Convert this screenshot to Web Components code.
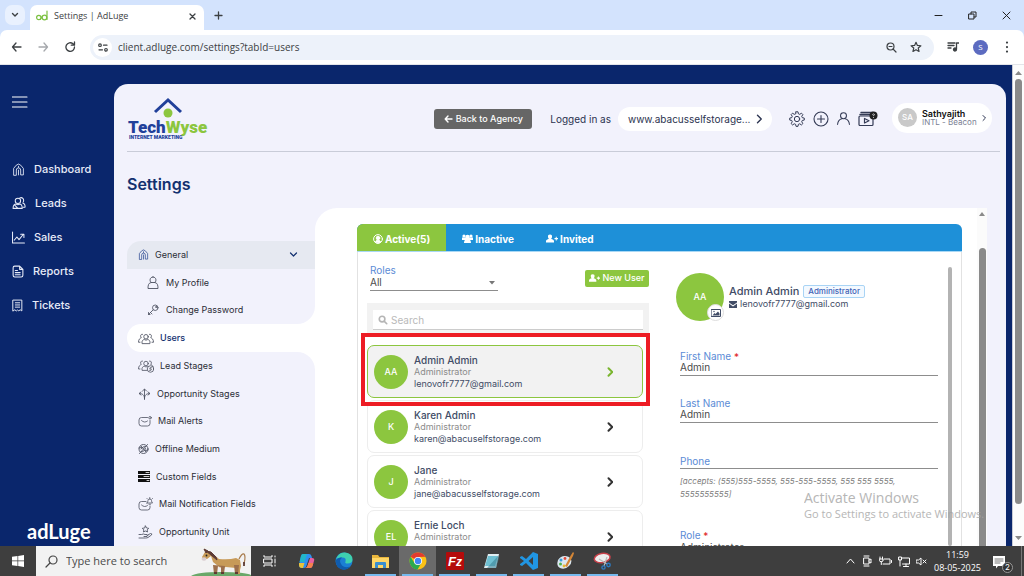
<!DOCTYPE html>
<html lang="en">
<head>
<meta charset="utf-8">
<title>Settings | AdLuge</title>
<style>
html,body{margin:0;height:100%}
body{display:flex;flex-direction:column;height:100vh;overflow:hidden;background:#fff;color:#2f3440;
  font:10px/14px Inter,"Open Sans",sans-serif}
</style>
</head>
<body>
<browser-bar></browser-bar>
<app-shell>
  <app-sidebar slot="side"></app-sidebar>
  <app-header slot="head"></app-header>
  <settings-menu slot="menu"></settings-menu>
  <user-panel></user-panel>
</app-shell>
<task-bar></task-bar>
<script>
const svg=(w,h,vb,body,extra='')=>`<svg width="${w}" height="${h}" viewBox="${vb}" fill="none" stroke="currentColor" stroke-linecap="round" stroke-linejoin="round" aria-hidden="true" ${extra}>${body}</svg>`;
const house=(w)=>svg(w,w,'0 0 24 24','<path d="M3 22V10L8 4l4-2 4 2 5 6v12h-5v-9a4 4 0 0 0-8 0v9zM12 13v9M12 6v2"/>','stroke-width="1.6"');
const person='<circle cx="12" cy="7" r="5"/><path d="M3 23v-2c0-4 3-6.500 5.500-7.500M21 23v-2c0-4-3-6.500-5.500-7.500"/>';
const people='<circle cx="16" cy="9" r="4.500"/><path d="M8 22c-1-5 2-7 4.500-7.500 2 1.500 5 1.500 7 0C22 15 25 17 24 22zM9 4C5 3 4 8 6.500 11 4 12 1 14 1 20h3M23 4c4-1 5 4 2.500 7C28 12 31 14 31 20h-3"/>';
const userPlus=(w,h)=>svg(w,h,'0 0 24 16','<path d="M8 0a4.200 4.200 0 0 1 4 5c-.3 2-1 3-2 3.500 3 1 6 2 6 5V16H0v-2.500c0-3 3-4 6-5C5 8 4.300 7 4 5a4.200 4.200 0 0 1 4-5zM17 7h2.500V4.500h2V7H24v2.500h-2.500V12h-2V9.500H17z"/>','style="fill:currentColor;stroke:none"');
const chev=(w,sw=2.6)=>svg(w,w*2,'0 0 8 16','<path d="M2 3l5 5-5 5"/>',`stroke-width="${sw}"`);
const I={
 burger:svg(16,12,'0 0 16 12','<path d="M0 1h15M0 6h15M0 11h15"/>','stroke-width="1.100"'),
 leads:svg(14,14,'0 0 26 24','<circle cx="11" cy="8" r="5"/><path d="M2 22c0-5 3-8 6-8 2 1.500 4 1.500 6 0 3 0 5 3 5 8zM14 3c5-3 9 2 7 7M20 12c3 1 5 4 4 8h-3M5 16l6 6"/>','stroke-width="1.900"'),
 sales:svg(13,13,'0 0 24 24','<path d="M1 2v20h22M4 17l5-6 4 5 8-10M16 6h6v6"/>','stroke-width="1.900"'),
 report:svg(12,13,'0 0 22 24','<path d="M5 2h9l6 6v11q0 3-3 3H5q-3 0-3-3V5q0-3 3-3zM14 2v6h6M6 10h4M6 14h9M6 18h9"/>','stroke-width="2"'),
 ticket:svg(11,13,'0 0 20 24','<path d="M2 2h16v20l-3-2-3 2-2-2-2 2-3-2-3 2zM6 7h8M6 11h8M6 15h8"/>','stroke-width="1.800"'),
 gear:svg(16,16,'0 0 24 24','<circle cx="12" cy="12" r="4"/><path d="M10.500 1.500h3l.6 3 2 .8 2.600-1.700 2.100 2.100-1.700 2.600.8 2 3 .6v3l-3 .6-.8 2 1.700 2.600-2.100 2.100-2.600-1.700-2 .8-.6 3h-3l-.6-3-2-.8-2.600 1.700-2.100-2.100 1.700-2.600-.8-2-3-.6v-3l3-.6.8-2-1.700-2.600 2.100-2.100 2.600 1.700 2-.8z" transform="translate(0 -.3)"/>','stroke-width="1.500"'),
 plus:svg(16,16,'0 0 16 16','<circle cx="8" cy="8" r="7"/><path d="M8 4.500v7M4.500 8h7"/>','stroke-width="1.100"'),
 user:svg(13,15,'0 0 24 26','<circle cx="12" cy="8" r="5.500"/><path d="M1 24q1-9 8-10.500M23 24q-1-9-8-10.500"/>','stroke-width="1.900"'),
 video:svg(20,16,'0 0 20 16','<path d="M3 1.500h12M2 3.500h14" stroke-width="1.400"/><rect x="1" y="5" width="14" height="9.500" rx="1"/><path d="M6.500 7.500v4.500L11 9.800z"/><circle cx="15.500" cy="4.500" r="4" fill="#222" stroke="none"/><path d="M14.500 3.500q1-1.300 2 0 0 .8-1 1.200M15.500 6.500v.1" stroke="#eee" stroke-width=".8"/>','stroke-width="1.200"'),
 down:svg(9,6,'0 0 9 6','<path d="M1.500 1l3 3 3-3"/>','stroke-width="1.200"'),
 profile:svg(12,14,'0 0 24 28','<path d="M12 2c7 0 7 8 4 11h-8C5 10 5 2 12 2zM8 13c-5 1-6 5-6 12h20c0-7-1-11-6-12"/>','stroke-width="1.800"'),
 key:svg(12,12,'0 0 24 24','<circle cx="16.500" cy="7.500" r="5.500"/><path d="M12.500 11.500L3 21M3 17v4h3M7 17l3 3"/><circle cx="18" cy="6" r="1"/>','stroke-width="1.700"'),
 people:svg(16,13,'0 0 32 25',people,'stroke-width="1.700"'),
 peopleC:svg(16,14,'0 0 32 28',people+'<circle cx="25" cy="20" r="6.500" fill="#f3f3fc"/><path d="M27 17.500h-3q-1.500 1.200 0 2.300h2q1.500 1.500 0 2.700h-3"/>','stroke-width="1.600"'),
 stages:svg(13,12,'0 0 26 24','<path d="M13 23V3M9 6l4-4 4 4M13 21C13 14 9 11 3 11M6 8l-4 3 4 3M13 21c0-7 4-10 10-10M20 8l4 3-4 3"/>','stroke-width="1.700"'),
 mail:svg(14,11,'0 0 28 22','<path d="M19 3H7Q2 3 2 8v7q0 5 5 5h12q5 0 5-5V9M7 9q6 6 12 1"/><circle cx="24" cy="3.500" r="2.500"/>','stroke-width="1.600"'),
 offline:svg(11,12,'0 0 22 24','<circle cx="11" cy="12" r="9"/><path d="M3 21L19 3M6 6l10 12M6 12q3-6 9-5M7 17q6 1 8-6M2 10l5-1M15 15l5-1"/>','stroke-width="1.800"'),
 fields:svg(12,11,'0 0 12 11','<path d="M0 0h12v3H0zM0 4h12v3H0zM0 8h12v3H0z" fill="#111" stroke="none"/><path d="M8 1.500h3M6 5.500h5M9 9.500h2" stroke="#fff" stroke-width=".8"/>'),
 bell:svg(15,14,'0 0 30 28','<path d="M16 9H7q-5 0-5 5v7q0 5 5 5h12q5 0 5-5v-3M7 16q6 6 12 1M18 12h11q-2-2-2-5 0-3-3.500-3T20 7q0 3-2 5zM22 14.500h3M23.500 1v3M18 3l1 1M29 3l-1 1"/>','stroke-width="1.600"'),
 hand:svg(15,14,'0 0 30 28','<path d="M15 2l2.200 4 4.300.7-3.200 3 .8 4.300-4.100-2-4.100 2 .8-4.300-3.200-3 4.300-.7zM2 19h5q4-2 7 0h4q3 2 0 4h-6M18 21l7-4q4 0 2 3l-7 5q-2 1-5 1H2"/>','stroke-width="1.700"'),
 magnify:svg(10,10,'0 0 16 16','<circle cx="6.500" cy="6.500" r="4.500"/><path d="M10.500 10.500l3.500 3.500"/>','stroke-width="2.600"')
};
function define(name,css,html){
  const t=document.createElement('template');
  t.innerHTML=`<style>*,:host{box-sizing:border-box}button,input,select{font:inherit;color:inherit;border:0;background:none;padding:0;margin:0;min-width:0}a{color:inherit;text-decoration:none}svg{display:block;flex:none}:host{display:block}${css}</style>${html}`;
  customElements.define(name,class extends HTMLElement{
    constructor(){super();this.attachShadow({mode:'open'}).append(t.content.cloneNode(true));}
    connectedCallback(){
      for(const n of this.shadowRoot.querySelectorAll('[data-from]'))n.textContent=this.getAttribute(n.dataset.from)||'';
      for(const n of this.shadowRoot.querySelectorAll('[data-value]'))n.value=this.getAttribute('value')||'';
    }
  });
}
define('browser-bar',`
:host{flex:none;background:#d3e3fd;color:#3c4043;font-family:"Open Sans","Noto Sans",sans-serif}
.tabs{display:flex;height:30px;align-items:center;padding-left:5px}
.search{width:20px;height:20px;border-radius:7px;background:#e9f1fe;display:grid;place-items:center}
.tab{align-self:flex-end;margin-left:5px;width:174px;height:25px;background:#fff;border-radius:7px 7px 0 0;display:flex;align-items:center;padding:0 8px 3px 6px;gap:6px;font-size:9px}
.tab span{flex:1}
.new{margin-left:10px}
.win{margin-left:auto;display:flex;gap:25px;padding-right:13px;color:#222}
.bar{height:35px;background:#fff;border-radius:7px 7px 0 0;display:flex;align-items:center;padding:0 15px 0 10px;border-bottom:1px solid #e3e5ea}
.nav{display:flex;gap:14px;width:80px}
.url{flex:1;height:25px;border-radius:13px;background:#edf2fa;display:flex;align-items:center;gap:13px;padding:0 12px 0 3px}
.site{width:19px;height:19px;border-radius:50%;background:#fff;display:grid;place-items:center}
input{flex:1;font-size:10px;margin-left:-7px;outline:0}
.right{display:flex;align-items:center;gap:14px;margin-left:13px}
.me{width:15px;height:15px;border-radius:50%;background:#5c6bc0;color:#fff;font-size:8px;display:grid;place-items:center;margin-right:3px}
`,`<div class="tabs">
<button class="search" aria-label="Search tabs">${svg(8,6,'0 0 8 6','<path d="M1.500 1.500L4 4l2.500-2.500"/>','stroke-width="1.400"')}</button>
<div class="tab">${svg(12,12,'0 0 12 12','<circle cx="2.800" cy="7.500" r="2.200"/><circle cx="8.500" cy="7.500" r="2.300"/><path d="M11 1v8.500M4.500 9.300l2-3.500"/>','stroke-width="1.200" style="color:#7cc142"')}<span>Settings | AdLuge</span><button aria-label="Close tab">${svg(7,7,'0 0 7 7','<path d="M1 1l5 5M6 1L1 6"/>','stroke-width="1.300"')}</button></div>
<button class="new" aria-label="New tab">${svg(9,9,'0 0 9 9','<path d="M4.500 1v7M1 4.500h7"/>','stroke-width="1.300"')}</button>
<div class="win"><button aria-label="Minimise">${svg(9,9,'0 0 9 9','<path d="M1 4.500h7"/>')}</button><button aria-label="Restore">${svg(9,9,'0 0 9 9','<path d="M1 3h5v5H1zM3 3V1h5v5H6"/>')}</button><button aria-label="Close">${svg(9,9,'0 0 9 9','<path d="M1 1l7 7M8 1L1 8"/>')}</button></div>
</div>
<div class="bar"><div class="nav">
<button aria-label="Back">${svg(13,12,'0 0 13 12','<path d="M11 6H2.500M6 2L2.500 6 6 10"/>','stroke-width="1.300"')}</button>
<button aria-label="Forward" style="color:#a5a8ac">${svg(13,12,'0 0 13 12','<path d="M2 6h8.500M7 2l3.500 4L7 10"/>','stroke-width="1.300"')}</button>
<button aria-label="Reload">${svg(12,12,'0 0 12 12','<path d="M10.500 6A4.300 4.300 0 1 1 9 2.800L10.300 4M10.500 1v3.200H7.300"/>','stroke-width="1.300"')}</button></div>
<div class="url"><button class="site" aria-label="Site information">${svg(10,9,'0 0 10 9','<circle cx="2" cy="2.200" r="1.300"/><path d="M5.500 2.200H9M1 6.800h3.500"/><circle cx="8" cy="6.800" r="1.300"/>','stroke-width="1.200"')}</button>
<input aria-label="Address" value="client.adluge.com/settings?tabId=users">
<button aria-label="Zoom">${svg(11,11,'0 0 11 11','<circle cx="4.500" cy="4.500" r="3.500"/><path d="M7 7l3 3M3 4.500h3"/>','stroke-width="1.200"')}</button>
<button aria-label="Bookmark">${svg(12,12,'0 0 24 24','<path d="M12 2.500l2.800 6.400 7 .6-5.300 4.600 1.600 6.800-6.100-3.600-6.100 3.600 1.600-6.800L2.200 9.500l7-.6z"/>','stroke-width="2.400"')}</button></div>
<div class="right"><button aria-label="Media">${svg(12,10,'0 0 12 10','<path d="M1 1h7M1 3.500h6M1 6h3M9.500 7V1H12"/><circle cx="8" cy="7.500" r="1.500" fill="currentColor"/>','stroke-width="1.300"')}</button><button class="me">S</button><button aria-label="Menu">${svg(4,12,'0 0 4 12','<path d="M2 1.500v.1M2 6v.1M2 10.500v.1"/>','stroke-width="2.200"')}</button></div></div>`);
define('app-shell',`
:host{flex:1;min-height:0;background:#0a266c;display:flex;overflow:hidden;position:relative}
main{flex:1;min-width:0;margin-top:19px;margin-right:6px;background:#f2f2fc;border-radius:14px 14px 0 0;display:flex;flex-direction:column}
.body{flex:1;min-height:0;display:flex;padding:0 19px 0 13px}
.left{width:188px;flex:none;display:flex;flex-direction:column}
h1{margin:23px 0 0;font-size:16px;line-height:18px;font-weight:600;color:#12306f}
::slotted(settings-menu){flex:1;min-height:0;margin-top:48px}
.scroll{width:12px;flex:none;background:#fcfcfc;border-left:1px solid #c8cbd4;display:flex;flex-direction:column;align-items:center;padding:6px 0;gap:4px;color:#8a8a8a}
.scroll i{width:7px;flex:0 1 425px;border-radius:4px;background:#8a8a8a}
.scroll svg:last-child{margin-top:auto}
.water{position:absolute;left:calc(100% - 220px);bottom:25px;color:#a4a4a4;opacity:.8;font:14px/18px "Open Sans","Noto Sans",sans-serif;white-space:nowrap}
.water p{margin:0}.water p+p{font-size:11px;line-height:14px}
`,`<slot name="side"></slot><main><slot name="head"></slot><div class="body"><div class="left"><h1>Settings</h1><slot name="menu"></slot></div><slot></slot></div></main>
<div class="scroll">${svg(7,4,'0 0 7 4','<path d="M0 4l3.500-4L7 4z" fill="currentColor" stroke="none"/>')}<i></i>${svg(7,4,'0 0 7 4','<path d="M0 0l3.500 4L7 0z" fill="currentColor" stroke="none"/>')}</div>
<div class="water"><p>Activate Windows</p><p>Go to Settings to activate Windows.</p></div>`);
define('app-sidebar',`
:host{width:114px;flex:none;color:#fff;display:flex;flex-direction:column;padding:31px 12px 3px}
nav{margin-top:44px;display:flex;flex-direction:column}
a{display:flex;align-items:center;gap:9px;height:34px;font-size:11px;font-weight:500;color:#e8ecf8}
button{align-self:flex-start}
.logo{margin:auto 0 0 15px;font:700 20px/24px Lato,Inter,sans-serif}
`,`<button aria-label="Menu">${I.burger}</button><nav><a href="#d">${house(13)}Dashboard</a><a href="#l">${I.leads}Leads</a><a href="#s">${I.sales}Sales</a><a href="#r">${I.report}Reports</a><a href="#t">${I.ticket}Tickets</a></nav><div class="logo">adLuge</div>`);
define('app-header',`
:host{flex:none;height:68px;margin:0 6px 0 13px;border-bottom:1px solid #c9ccd8;padding:2px 8px 0 0;display:flex;align-items:center;color:#2b3350}
.logo{margin:0 auto 0 0;width:84px}
.back{height:20px;width:98px;flex:none;border-radius:3px;background:#666;color:#fff;font-size:9px;font-weight:500;display:flex;align-items:center;justify-content:center;gap:3px;margin-right:18px}
.pill{margin:0 17px 0 7px;width:154px;flex:none;height:24px;border-radius:12px;background:#fff;display:flex;align-items:center;justify-content:space-between;padding:0 10px}
.icons{display:flex;align-items:center;gap:8px;color:#343b55;margin-right:14px}
.prof{height:30px;width:100px;flex:none;border-radius:15px;background:#fff;display:flex;align-items:center;gap:5px;padding:0 9px 0 6px;text-align:left;margin-top:-2px}
.prof b{display:block;font-size:9px;line-height:9px;color:#111;font-weight:600}.prof span{font-size:8px;line-height:9px;color:#7a8093;flex:1;white-space:nowrap}
.prof i{width:19px;height:19px;flex:none;border-radius:50%;background:#c9c9c9;color:#fff;font:500 8px/19px Inter,sans-serif;text-align:center}
`,`<svg class="logo" width="84" height="46" viewBox="0 0 84 46" role="img" aria-label="TechWyse Internet Marketing"><path d="M28 16L41 4l13 12" fill="none" stroke="#21409a" stroke-width="3"/><circle cx="41" cy="17" r="4.500" fill="#8cc63f"/><text x="1" y="37" font-family="Roboto,sans-serif" font-weight="900" font-size="17"><tspan fill="#21409a">Tech</tspan><tspan fill="#8cc63f">Wyse</tspan></text><text x="2" y="43" font-family="Roboto,sans-serif" font-weight="900" font-size="5" fill="#21409a">INTERNET MARKETING</text></svg>
<button class="back">${svg(9,8,'0 0 9 8','<path d="M8 4H1.500M4 1L1.200 4 4 7"/>','stroke-width="1.400"')}Back to Agency</button><span>Logged in as</span>
<button class="pill">www.abacusselfstorage...${chev(6,1.8)}</button>
<div class="icons"><button aria-label="Settings">${I.gear}</button><button aria-label="Add">${I.plus}</button><button aria-label="Account">${I.user}</button><button aria-label="Tutorials">${I.video}</button></div>
<button class="prof"><i>SA</i><span><b>Sathyajith</b>INTL - Beacon</span>${chev(4,2)}</button>`);
define('settings-menu',`
:host{display:flex;flex-direction:column;color:#2a2d36;font-size:9px}
nav{display:contents}
section{display:flex;flex-direction:column;min-height:0}
section>div{flex:1;display:flex;flex-direction:column}
.top{flex:3;background:linear-gradient(90deg,#f2f2fc 50%,#fff 50%)}.top>div{background:#f2f2fc;border-radius:0 0 18px}
.cur{flex:1}.cur>div{background:#fff;border-radius:14px 0 0 14px;color:#12306f;font-weight:500}
.rest{flex:7;background:linear-gradient(90deg,#f2f2fc 50%,#fff 50%)}.rest>div{background:#f2f2fc;border-radius:0 18px 0 0}
a{flex:1;display:flex;align-items:center;gap:6px;padding-left:11px;min-height:24px}
a svg{color:#4c5060}
.sub{padding-left:20px;gap:7px}
.gen{background:#e6e9f1;border-radius:14px 0 0}.gen svg:last-child{margin:0 17px 0 auto;color:#12306f}.gen svg:first-child{color:#2d4a93}
`,`<nav><section class="top"><div><a class="gen" href="#g">${house(11)}General${I.down}</a><a class="sub" href="#p">${I.profile}My Profile</a><a class="sub" href="#c">${I.key}Change Password</a></div></section>
<section class="cur"><div><a href="#u" aria-current="page">${I.people}Users</a></div></section>
<section class="rest"><div><a href="#1">${I.peopleC}Lead Stages</a><a href="#2">${I.stages}Opportunity Stages</a><a href="#3">${I.mail}Mail Alerts</a><a href="#4">${I.offline}Offline Medium</a><a href="#5">${I.fields}Custom Fields</a><a href="#6">${I.bell}Mail Notification Fields</a><a href="#7">${I.hand}Opportunity Unit</a></div></section></nav>`);
define('user-card',`
:host{position:relative;display:flex;align-items:center;height:53px;flex:none;margin-right:6px;border:1px solid #ededed;border-radius:7px;padding:0 29px 0 6px;gap:6px;color:#333}
.av{width:34px;height:34px;flex:none;border-radius:50%;background:#8cc63f;color:#fff;display:grid;place-items:center;font-size:9px;font-weight:500}
.t{flex:1;font-size:9px;line-height:12px;color:#414c66}.t div{white-space:nowrap;min-height:12px}
.t .n{font-size:10px;font-weight:500}.r{color:#8b8b8b}
:host([selected]){background:#f2f2f2;border-color:#8cc63f;color:#7ab52e;z-index:1}
:host([selected])::after{content:"";position:absolute;inset:-13px -8px -9px -7px;border:4px solid #ed1c24}
`,`<div class="av" data-from="initials"></div><div class="t"><div class="n" data-from="name"></div><div class="r">Administrator</div><div data-from="mail"></div></div>${chev(6,2.6)}`);
define('line-field',`
:host{flex:none;color:#4a4a4a}
label{display:block;font-size:10px;line-height:11px;color:#5b8bd6}sup{color:#e02020;font-size:10px;line-height:0;vertical-align:-1px}
input{display:block;width:100%;height:11px;line-height:11px;border-bottom:1px solid #8d8d8d;box-sizing:content-box;outline:0;padding-bottom:2px}
:host([empty]) input{height:0;padding-bottom:1px}
:host(:not([required])) sup{display:none}
`,`<label for="f"><span data-from="label"></span><sup> *</sup></label><input id="f" data-value>`);
define('line-select',`
:host{flex:none;color:#4a4a4a}
label{display:block;font-size:10px;line-height:11px;color:#5b8bd6}sup{color:#e02020;font-size:10px;line-height:0;vertical-align:-1px}
div{display:grid;align-items:center;border-bottom:1px solid #8d8d8d;height:15px}
select,svg{grid-area:1/1}select{appearance:none;width:100%;height:12px;align-self:start;line-height:12px;outline:0}
svg{justify-self:end;margin-right:3px;pointer-events:none}
:host(:not([required])) sup{display:none}
`,`<label for="s"><span data-from="label"></span><sup> *</sup></label><div><select id="s"><option data-from="value"></option></select>${svg(6,4,'0 0 6 4','<path d="M0 0h6L3 3.500z" fill="#777" stroke="none"/>')}</div>`);
define('user-detail',`
:host{display:flex;gap:10px;min-height:0;padding-top:15px}
.c{flex:1;min-width:0;overflow:hidden;display:flex;flex-direction:column}
.bar{width:4px;background:#b3b3b3;border-radius:2px}
.h{display:flex;align-items:center;gap:5px;margin-top:6px;flex:none;color:#414c66}
.av{position:relative;width:48px;height:48px;flex:none;border-radius:50%;background:#8cc63f;color:#fff;display:grid;place-items:center;font-size:9px;font-weight:500}
.av button{position:absolute;right:0;bottom:0;width:17px;height:17px;border-radius:50%;background:#fff;border:1px solid #ddd;display:grid;place-items:center;color:#414c66}
.n{display:flex;align-items:center;gap:4px;font-size:11px;font-weight:500;line-height:14px;white-space:nowrap}
.n span{font-size:8px;line-height:11px;border:1px solid #a9d4f5;background:#f3f9ff;color:#3f62b5;border-radius:2px;padding:0 4px}
.m{display:flex;align-items:center;gap:3px;font-size:9px;line-height:12px;white-space:nowrap}
.f{padding-left:4px;display:flex;flex-direction:column;margin-top:30px;gap:22px}
line-field[empty]{margin-top:11px}
p{margin:-16px 0 7px;font-size:8px;line-height:13px;font-style:italic;color:#7d7d7d}
`,`<div class="c"><div class="h"><div class="av">AA<button aria-label="Change picture">${svg(10,8,'0 0 10 8','<rect x=".5" y=".5" width="9" height="7"/><path d="M1.500 6.500l2-2.500 1 1L7 2.500l1.500 2v2z" fill="currentColor" stroke="none"/><circle cx="3" cy="2.500" r=".7" fill="currentColor" stroke="none"/>')}</button></div><div><div class="n">Admin Admin <span>Administrator</span></div><div class="m">${svg(8,7,'0 0 8 7','<path d="M0 0h8v1.500L4 4.300 0 1.500zM0 2.600l4 2.800 4-2.800V7H0z" fill="currentColor" stroke="none"/>')}lenovofr7777@gmail.com</div></div></div>
<div class="f"><line-field label="First Name" value="Admin" required></line-field><line-field label="Last Name" value="Admin"></line-field><line-field label="Phone" value="" empty></line-field><p>[accepts: (555)555-5555, 555-555-5555, 555 555 5555, 5555555555]</p><line-select label="Role" value="Administrator" required></line-select></div></div><div class="bar"></div>`);
define('user-panel',`
:host{flex:1;min-width:0;margin-top:56px;background:#fff;border-radius:22px 0 0;display:flex}
.card{flex:1;min-width:0;margin:16px 15px 0 42px;display:flex;flex-direction:column;border:1px solid #e2e2e2;border-width:0 1px;border-radius:6px 6px 0 0}
.tabs{display:flex;flex:none;background:#1e90d8;border-radius:6px 6px 0 0;margin:0 -1px;height:28px;overflow:hidden;color:#fff;font-weight:700;border-bottom:1px solid #a9d8f5}
.tabs button{display:flex;align-items:center;gap:2px;padding:2px 16px 0}
.tabs button:first-child{background:#8cc63f;margin-bottom:-1px}
.body{flex:1;min-height:0;display:grid;grid-template-columns:47fr 46fr;gap:27px;padding:0 9px;overflow:hidden;grid-template-rows:minmax(0,1fr)}
.list{display:flex;flex-direction:column;min-width:0;min-height:0;overflow:visible}
.r{display:flex;justify-content:space-between;align-items:center;margin:13px 0 12px;padding-left:3px;flex:none}
line-select{width:128px}
.new{width:64px;height:17px;border-radius:2px;background:#8cc63f;color:#fff;font-size:9px;font-weight:500;display:flex;align-items:center;justify-content:center;gap:2px}
.s{background:#f2f2f2;padding:7px 6px 3px;flex:none;margin-bottom:12px}
.s label{background:#fff;display:flex;align-items:center;gap:3px;height:20px;border-bottom:1px solid #ccc;padding-left:5px;color:#b5b5b5}
input{flex:1;outline:0}input::placeholder{color:#b9b9b9}
.us{display:flex;flex-direction:column;gap:2px}
.scroll{width:10px;flex:none;background:#fbfbfb;display:flex;flex-direction:column;align-items:center;padding-top:4px;gap:32px;color:#8a8a8a}
.scroll i{flex:1;width:7px;background:#8a8a8a;border-radius:4px 4px 0 0}
`,`<div class="card"><div class="tabs" role="tablist"><button role="tab" aria-selected="true">${svg(10,10,'0 0 10 10','<circle cx="5" cy="5" r="4.400"/><circle cx="5" cy="4" r="1.800" fill="currentColor"/><path d="M2.500 8q.5-2 2.500-2t2.500 2L5 9z" fill="currentColor"/>')}Active(5)</button><button role="tab">${svg(11,9,'0 0 11 9','<g fill="currentColor" stroke="none"><circle cx="2" cy="2" r="1.600"/><circle cx="9" cy="2" r="1.600"/><circle cx="5.500" cy="3" r="2.200"/><path d="M0 3.500h11v2.500H0zM2 9q0-4 3.500-4T9 9z"/></g>')}Inactive</button><button role="tab">${userPlus(12,9)}Invited</button></div>
<div class="body"><div class="list"><div class="r"><line-select label="Roles" value="All"></line-select><button class="new">${userPlus(11,8)}New User</button></div>
<div class="s"><label>${I.magnify}<input type="search" placeholder="Search" aria-label="Search users"></label></div>
<div class="us"><user-card selected initials="AA" name="Admin Admin" mail="lenovofr7777@gmail.com"></user-card><user-card initials="K" name="Karen Admin" mail="karen@abacuselfstorage.com"></user-card><user-card initials="J" name="Jane" mail="jane@abacusselfstorage.com"></user-card><user-card initials="EL" name="Ernie Loch" mail=""></user-card></div></div>
<user-detail></user-detail></div></div>
<div class="scroll">${svg(6,4,'0 0 6 4','<path d="M0 4l3-4 3 4z" fill="currentColor" stroke="none"/>')}<i></i></div>`);
define('task-bar',`
:host{flex:none;height:30px;background:#3e3e3e;display:flex;align-items:stretch;color:#fff;font-family:"Open Sans","Noto Sans",sans-serif}
button{display:grid;place-items:center}
.start{width:36px}
.q{width:215px;background:#f2f2f2;color:#444;display:flex;align-items:center;padding-left:9px;gap:8px}
input{flex:1;font-size:11px;outline:0}input::placeholder{color:#4a4a4a}
.apps{display:flex}.apps button{width:37px;position:relative}
.on::after{content:"";position:absolute;left:3px;right:3px;bottom:0;height:2px;background:#76b9ed}
.apps .act{background:#6a6a6a}
.tray{margin-left:auto;display:flex;align-items:center;gap:6px}
time{display:block;font-size:9px;line-height:13px;text-align:center;margin-left:1px;white-space:nowrap}
.note{position:relative;margin:2px 15px 0 6px}
.note b{position:absolute;left:9px;top:6px;width:11px;height:11px;border-radius:50%;border:1px solid #999;background:#333;font:8px/9px Inter,sans-serif;text-align:center}
.edge{align-self:stretch;border-left:1px solid #777;width:3px;margin-left:-6px}
`,`<button class="start" aria-label="Start">${svg(12,12,'0 0 12 12','<path d="M0 1.800L5.500 1v4.600H0zM6.200.9L12 0v5.600H6.200zM0 6.300h5.500V11L0 10.200zM6.200 6.300H12V12l-5.800-.9z" fill="#fff" stroke="none"/>')}</button>
<label class="q">${svg(13,13,'0 0 13 13','<circle cx="8" cy="5" r="4"/><path d="M5 8L1 12"/>','stroke-width="1.200"')}<input placeholder="Type here to search" aria-label="Type here to search">
<svg width="60" height="30" viewBox="0 0 60 30"><path d="M0 30q6-4 30-4t30 3v1z" fill="#69a869"/><path d="M14 6l3-1 5 3 6 5q10 1 17-1l4 2 1 6-1 4v4h-3l-1-6-10-1q-5 1-7 0l-1-1-5-4-2-6-4 3-4 0-1-2z" fill="#c79a58"/><path d="M22 19l1 9h3l1-8 3 1 0 7h3l1-8M43 19l1 9h3l1-9" fill="#9c6f4c"/><path d="M13 3l2 4 2-2zM15 5l5 1 5 5 1 3-6-5z" stroke="#5d3b35" fill="#5d3b35"/><path d="M48 13q3-6 5-5 2 2 0 10" stroke="#a87a4a" stroke-width="1.200" fill="none"/><path d="M53 16v4" stroke="#5d3b35" stroke-width="1.800"/><circle cx="15.500" cy="9.500" r=".9" fill="#222"/><ellipse cx="13" cy="13" rx="2.500" ry="1.800" fill="#d9cdd0"/><path d="M23 27h3M30 27h3M44 27h3" stroke="#4b2a2a" stroke-width="1.600"/></svg></label>
<div class="apps">
<button aria-label="Task view">${svg(13,12,'0 0 13 12','<path d="M1 .5v1.500h8V.5M1 11.500V10h8v1.500M1 4h8v4H1zM12 1v1M12 4v4M12 10v1"/>')}</button>
<button aria-label="Copilot">${svg(17,16,'0 0 17 16','<path d="M5 1h6q2 0 2.500 2L14 5h-3L8 14q-1 1-2 1H4q-3 0-3-3L3 3q.5-2 2-2z" fill="#2f8ff0" stroke="none"/><path d="M1.500 9L3 3q.5-2 2-2h4L6.500 9z" fill="#21b6c8" stroke="none"/><path d="M1 10h5.500L5 15H4q-3 0-3-3z" fill="#e8c13a" stroke="none"/><path d="M12 15H7q2 0 2.500-2L12 5h2q3 0 2 3l-1.500 5q-.5 2-2.500 2z" fill="#e75fa0" stroke="none"/><path d="M12 15H7q2 0 2.500-2l.8-3h5L14.500 13q-.5 2-2.500 2z" fill="#f5824c" stroke="none"/>')}</button>
<button aria-label="Edge"><svg width="18" height="18" viewBox="0 0 18 18"><circle cx="9" cy="9" r="8.500" fill="#1b7fd4"/><path d="M1 8q2-8 9-7.500 7.500 1 7.500 7 0 4-5 4-3 0-2-2 1-4-3-4Q2 5 1 8z" fill="#3ed0b0"/><path d="M1 8q2-3 6-2.500-4 3 0 8 3 3 8 1-3 4-8 3Q0 15 1 8z" fill="#0f5cae"/></svg></button>
<button class="on" aria-label="File Explorer"><svg width="17" height="15" viewBox="0 0 17 15"><path d="M0 1h6l1.500 2H17v11H0z" fill="#e9b63c"/><path d="M0 4h17v10H0z" fill="#ffd767"/><path d="M3 14V9q0-1 1-1h9q1 0 1 1v5h-3v-3H6v3z" fill="#3a8fd0"/></svg></button>
<button class="on act" aria-label="Chrome"><svg width="18" height="18" viewBox="0 0 18 18"><circle cx="9" cy="9" r="8.500" fill="#fbc116"/><path d="M9 9L1.600 4.800A8.500 8.500 0 0 1 16.400 4.800L9 5z" fill="#e33b2e"/><path d="M1.600 4.800A8.500 8.500 0 0 0 8.500 17.500L12.400 11 9 9 5.500 11z" fill="#2da94f"/><circle cx="9" cy="9" r="4" fill="#fff"/><circle cx="9" cy="9" r="3.200" fill="#4285f4"/></svg></button>
<button class="on" aria-label="FileZilla"><svg width="18" height="18" viewBox="0 0 18 18"><rect width="18" height="18" rx="1" fill="#b40b0b"/><text x="2" y="14" fill="#fff" font-family="Liberation Sans,sans-serif" font-style="italic" font-weight="700" font-size="13">F<tspan font-size="12">z</tspan></text></svg></button>
<button class="on" aria-label="Notepad"><svg width="17" height="17" viewBox="0 0 17 17"><path d="M5 1h11l-3 14H1z" fill="#dfeef2"/><path d="M5 3h10l-3 10H2z" fill="#6fc0d2"/><path d="M15 3l1 2-3 10H4z" fill="#3c8497" opacity=".6"/></svg></button>
<button class="on" aria-label="Visual Studio Code"><svg width="18" height="18" viewBox="0 0 18 18"><path d="M13 0l5 2v14l-5 2-7-7-4 3-2-1v-1l4-3-4-3V5l2-1 4 3zM13 5L8.500 9l4.500 4z" fill="#2196e3" fill-rule="evenodd"/></svg></button>
<button class="on" aria-label="Paint"><svg width="19" height="18" viewBox="0 0 19 18"><path d="M2 8q4-6 11-3 5 4 0 9-4 4-9 2Q0 14 2 8z" fill="#dce8f0"/><circle cx="5" cy="8" r="1.500" fill="#3b9de0"/><circle cx="4.500" cy="12" r="1.500" fill="#50b050"/><circle cx="9" cy="6.500" r="1.400" fill="#e04c3c"/><circle cx="8" cy="14" r="1.400" fill="#e6b92e"/><path d="M9 14l6-11 2-3 1 1-1 3-6 11z" fill="#d48636"/></svg></button>
<button class="on" aria-label="Snipping Tool"><svg width="19" height="18" viewBox="0 0 19 18"><ellipse cx="9" cy="6" rx="8" ry="4.500" fill="#eee" stroke="#c8414a" stroke-width="1.500" transform="rotate(-10 9 5)"/><path d="M6 7l8 5M14 5l-3 9" stroke="#bbb" stroke-width="1.200"/><circle cx="15.500" cy="13" r="1.700" fill="none" stroke="#2e7ac0" stroke-width="1.400"/><circle cx="10.500" cy="15.500" r="1.600" fill="none" stroke="#2e7ac0" stroke-width="1.400"/></svg></button>
</div>
<div class="tray">${svg(9,6,'0 0 9 6','<path d="M1 5l3.500-4L8 5"/>')}
${svg(12,12,'0 0 12 12','<path d="M3 3h5v6H3zM8 5l2-1v4L8 7M3 1h5M3 11h5"/>')}
${svg(13,10,'0 0 13 10','<path d="M5 3h6v5H4M12.500 4.500v2M1 1v2M3.500 1v2M.5 3h3.500v2Q2 7 .5 5zM2.300 6v2.500"/>')}
${svg(12,11,'0 0 12 11','<path d="M4 2h7.500v6H4.500M8 8v2M5.500 10.500h5M1 1h2.500v3H1zM2 4v6"/>')}
${svg(11,9,'0 0 11 9','<path d="M.5 3h2L5 1v7L2.500 6h-2zM7 3l3 3M10 3L7 6"/>')}
<time>11:59<br>08-05-2025</time>
<div class="note">${svg(13,13,'0 0 13 13','<path d="M0 0h12v10H5l-2 2.500V10H0z" fill="#fff" stroke="none"/><path d="M2 3h8M2 5h8M2 7h5" stroke="#555" stroke-width=".8"/>')}<b>2</b></div><div class="edge"></div></div>`);
</script>
</body>
</html>
